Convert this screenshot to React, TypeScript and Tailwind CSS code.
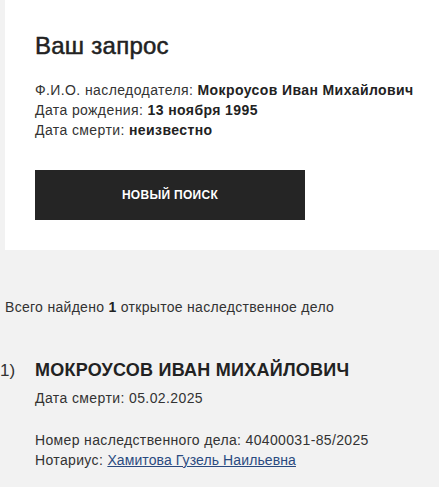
import React from "react";

export default function App() {
  return (
    <div
      className="w-[439px] h-[487px] bg-[#f2f2f2] text-[#222222] overflow-hidden"
      style={{ fontFamily: '"Liberation Sans", Arial, sans-serif' }}
    >
      <div className="ml-[5px] bg-white pl-[30px] pt-[32px] pb-[30px]">
        <h1 className="text-[24px] leading-[28px] font-normal text-[#222] tracking-[0.25px] [-webkit-text-stroke:0.5px_#222]">
          Ваш запрос
        </h1>
        <div className="mt-[20px] text-[14px] leading-[20px] text-[#333] tracking-[0.4px]">
          <div>
            Ф.И.О. наследодателя: <b className="text-[#222]">Мокроусов Иван Михайлович</b>
          </div>
          <div>
            Дата рождения: <b className="text-[#222]">13 ноября 1995</b>
          </div>
          <div>
            Дата смерти: <b className="text-[#222]">неизвестно</b>
          </div>
        </div>
        <button className="mt-[30px] w-[270px] h-[50px] bg-[#252525] text-white text-[12px] font-bold tracking-[0.3px] flex items-center justify-center">
          НОВЫЙ ПОИСК
        </button>
      </div>
      <div className="pl-[5px] mt-[47px] text-[14px] leading-[20px] text-[#333] tracking-[0.3px]">
        Всего найдено <b className="text-[#222]">1</b> открытое наследственное дело
      </div>
      <div className="mt-[42px] flex">
        <div className="w-[35px] text-[17px] leading-[22px] text-[#333] pt-[1px]">1)</div>
        <div>
          <div className="text-[18px] leading-[22px] font-bold text-[#222] tracking-[0.25px]">
            МОКРОУСОВ ИВАН МИХАЙЛОВИЧ
          </div>
          <div className="mt-[7px] text-[14px] leading-[20px] text-[#333] tracking-[0.4px]">
            Дата смерти: 05.02.2025
          </div>
          <div className="mt-[22px] text-[14px] leading-[20px] text-[#333] tracking-[0.35px]">
            <div>Номер наследственного дела: 40400031-85/2025</div>
            <div>
              Нотариус:{" "}
              <a href="#" className="text-[#2a4a80] underline tracking-[0.1px]">
                Хамитова Гузель Наильевна
              </a>
            </div>
          </div>
        </div>
      </div>
    </div>
  );
}
